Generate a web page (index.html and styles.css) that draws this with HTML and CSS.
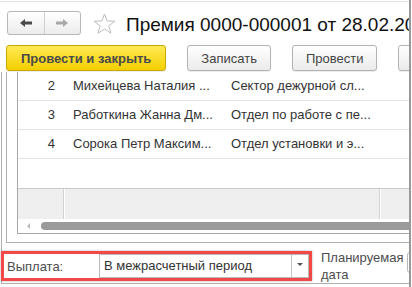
FILE: index.html
```html
<!DOCTYPE html>
<html lang="ru">
<head>
    <meta charset="UTF-8">
    <meta name="viewport" content="width=device-width, initial-scale=1.0">
    <title>Премия 0000-000001</title>
    <link rel="stylesheet" href="styles.css">
</head>
<body>
    <div class="page">
        <div class="topstrip"></div>

        <div class="header">
            <div class="nav">
                <span class="nav-btn">
                    <svg width="12" height="8" viewBox="0 0 12 8"><path d="M0 4 L5 0 L5 2.5 L12 2.5 L12 5.5 L5 5.5 L5 8 Z" fill="#4a4a4a"/></svg>
                </span>
                <span class="nav-btn">
                    <svg width="12" height="8" viewBox="0 0 12 8"><path d="M12 4 L7 0 L7 2.5 L0 2.5 L0 5.5 L7 5.5 L7 8 Z" fill="#a8a8a8"/></svg>
                </span>
            </div>
            <svg class="star" width="23" height="21" viewBox="0 0 23 21">
                <polygon points="11.5,1 14.2,7.9 21.8,8.2 15.8,12.9 17.9,20.2 11.5,16 5.1,20.2 7.2,12.9 1.2,8.2 8.8,7.9" fill="none" stroke="#bdbdbd" stroke-width="1"/>
            </svg>
            <h1 class="title">Премия 0000-000001 от 28.02.2018</h1>
        </div>

        <div class="toolbar">
            <button class="btn btn-primary">Провести и закрыть</button>
            <button class="btn">Записать</button>
            <button class="btn">Провести</button>
            <button class="btn btn-icon">
                <svg width="14" height="16" viewBox="0 0 14 16">
                    <rect x="0.5" y="0.5" width="11" height="14" fill="#fff" stroke="#8a9bb0"/>
                    <path d="M2.5 3.5 H9.5 M2.5 6 H9.5 M2.5 8.5 H9.5 M2.5 11 H7" stroke="#7d8fa8"/>
                    <circle cx="11" cy="12.5" r="3" fill="#f3b72a"/>
                </svg>
            </button>
        </div>

        <div class="form">
            <div class="group">
                <div class="grid">
                    <div class="rows">
                        <div class="row">
                            <span class="c-num">2</span>
                            <span class="c-name">Михейцева Наталия ...</span>
                            <span class="c-dept">Сектор дежурной сл...</span>
                        </div>
                        <div class="row">
                            <span class="c-num">3</span>
                            <span class="c-name">Работкина Жанна Дм...</span>
                            <span class="c-dept">Отдел по работе с пе...</span>
                        </div>
                        <div class="row">
                            <span class="c-num">4</span>
                            <span class="c-name">Сорока Петр Максим...</span>
                            <span class="c-dept">Отдел установки и э...</span>
                        </div>
                    </div>
                    <div class="grid-footer">
                        <span class="f-num"></span>
                        <span class="f-main"></span>
                        <span class="f-rest"></span>
                    </div>
                    <div class="hscroll">
                        <span class="scroll-arrow"></span>
                        <span class="scroll-thumb"></span>
                    </div>
                </div>
            </div>

            <div class="payment">
                <div class="highlight">
                    <span class="label">Выплата:</span>
                    <div class="select">
                        <span class="select-value">В межрасчетный период</span>
                        <span class="select-drop"></span>
                    </div>
                </div>
                <span class="label planned">Планируемая<br>дата</span>
                <div class="date-field"></div>
            </div>
        </div>
    </div>
</body>
</html>
```

FILE: styles.css
```css
body {
    margin: 0;
    background-color: #fff;
    font-family: "Liberation Sans", Arial, sans-serif;
    font-size: 13px;
    color: #333;
}
.page {
    width: 411px;
    height: 287px;
    box-sizing: border-box;
    border-right: 2px solid #999;
    overflow: hidden;
}
.topstrip {
    height: 1px;
    border-bottom: 1px solid #e2e2e2;
}

/* header */
.header {
    display: flex;
    align-items: flex-start;
    padding: 9px 0 0 7px;
    height: 24px;
}
.nav {
    display: flex;
    flex-shrink: 0;
    width: 74px;
    height: 24px;
    box-sizing: border-box;
    border: 1px solid #b8b8b8;
    border-radius: 3px;
    background: linear-gradient(#fff, #ececec);
}
.nav-btn {
    flex: 1;
    display: flex;
    justify-content: center;
    align-items: center;
}
.nav-btn:first-child {
    border-right: 1px solid #cfcfcf;
}
.star {
    margin: 2px 0 0 12px;
    flex-shrink: 0;
}
.title {
    margin: 2px 0 0 10px;
    font-size: 19px;
    font-weight: normal;
    line-height: 24px;
    color: #111;
    white-space: nowrap;
    flex-shrink: 0;
}

/* toolbar */
.toolbar {
    display: flex;
    gap: 21px;
    margin-top: 10px;
    padding-left: 6px;
    height: 26px;
}
.btn {
    height: 26px;
    box-sizing: border-box;
    padding: 0 13px;
    border: 1px solid #b3b3b3;
    border-radius: 3px;
    background: linear-gradient(#fff, #ebebeb);
    box-shadow: 0 1px 1px rgba(0, 0, 0, 0.08);
    font-family: inherit;
    font-size: 13px;
    color: #444;
    white-space: nowrap;
    flex-shrink: 0;
}
.btn-primary {
    padding: 0 14px;
    background: linear-gradient(#ffea55, #f3cf00);
    border-color: #c9a900;
    font-weight: bold;
    color: #4a4a4a;
}
.btn-icon {
    width: 32px;
    padding: 0 0 0 10px;
    display: flex;
    align-items: center;
}

/* form body */
.form {
    margin: 1px 0 0 1px;
    border-left: 1px solid #b0b0b0;
    border-bottom: 1px solid #b0b0b0;
}
.group {
    margin-left: 4px;
    padding-bottom: 8px;
    border-left: 1px solid #b0b0b0;
    border-bottom: 1px solid #b0b0b0;
}
.grid {
    margin-left: 10px;
    border-left: 1px solid #a6a6a6;
    border-bottom: 1px solid #a6a6a6;
}
.rows {
    height: 116px;
}
.row {
    display: flex;
    height: 29px;
    box-sizing: border-box;
    border-bottom: 1px solid #e3e3e3;
    line-height: 28px;
    white-space: nowrap;
}
.c-num {
    width: 46px;
    padding-right: 9px;
    box-sizing: border-box;
    text-align: right;
}
.c-name {
    width: 159px;
    padding-left: 9px;
    box-sizing: border-box;
}
.c-dept {
    padding-left: 8px;
}
.grid-footer {
    display: flex;
    height: 31px;
    box-sizing: border-box;
    border-top: 1px solid #cacaca;
}
.grid-footer span {
    background-color: #efefef;
}
.f-num {
    width: 45px;
    border-right: 1px solid #d2d2d2;
    margin-right: 1px;
}
.f-main {
    width: 314px;
    border-right: 1px solid #d2d2d2;
    margin-right: 1px;
}
.f-rest {
    flex: 1;
}
.hscroll {
    display: flex;
    align-items: center;
    height: 14px;
}
.scroll-arrow {
    margin-left: 9px;
    width: 0;
    height: 0;
    border-top: 3px solid transparent;
    border-bottom: 3px solid transparent;
    border-right: 3px solid #bbb;
}
.scroll-thumb {
    flex: 1;
    height: 8px;
    margin-left: 11px;
    border-radius: 4px 0 0 4px;
    background-color: #9b9b9b;
}

/* payment row */
.payment {
    display: flex;
    align-items: flex-start;
    height: 40px;
}
.highlight {
    display: flex;
    align-items: center;
    width: 311px;
    height: 30px;
    box-sizing: border-box;
    margin: 8px 0 0 -1px;
    border: 3px solid #f24848;
    box-shadow: 0 0 2px rgba(0, 0, 0, 0.35);
    flex-shrink: 0;
}
.label {
    color: #4d4d4d;
}
.highlight .label {
    width: 95px;
    padding-left: 3px;
    box-sizing: border-box;
}
.select {
    display: flex;
    flex: 1;
    height: 24px;
    box-sizing: border-box;
    border: 1px solid #b8b8b8;
}
.select-value {
    flex: 1;
    padding-left: 4px;
    line-height: 22px;
    color: #333;
    white-space: nowrap;
}
.select-drop {
    width: 17px;
    box-sizing: border-box;
    border-left: 1px solid #c4c4c4;
    display: flex;
    justify-content: center;
    padding-top: 8px;
}
.select-drop::after {
    content: "";
    width: 0;
    height: 0;
    border-left: 3px solid transparent;
    border-right: 3px solid transparent;
    border-top: 3px solid #555;
}
.planned {
    margin: 6px 0 0 9px;
    line-height: 17px;
    flex-shrink: 0;
}
.date-field {
    width: 40px;
    height: 21px;
    box-sizing: border-box;
    margin: 9px 0 0 4px;
    border: 1px solid #b8b8b8;
    border-radius: 3px;
    flex-shrink: 0;
}
```
